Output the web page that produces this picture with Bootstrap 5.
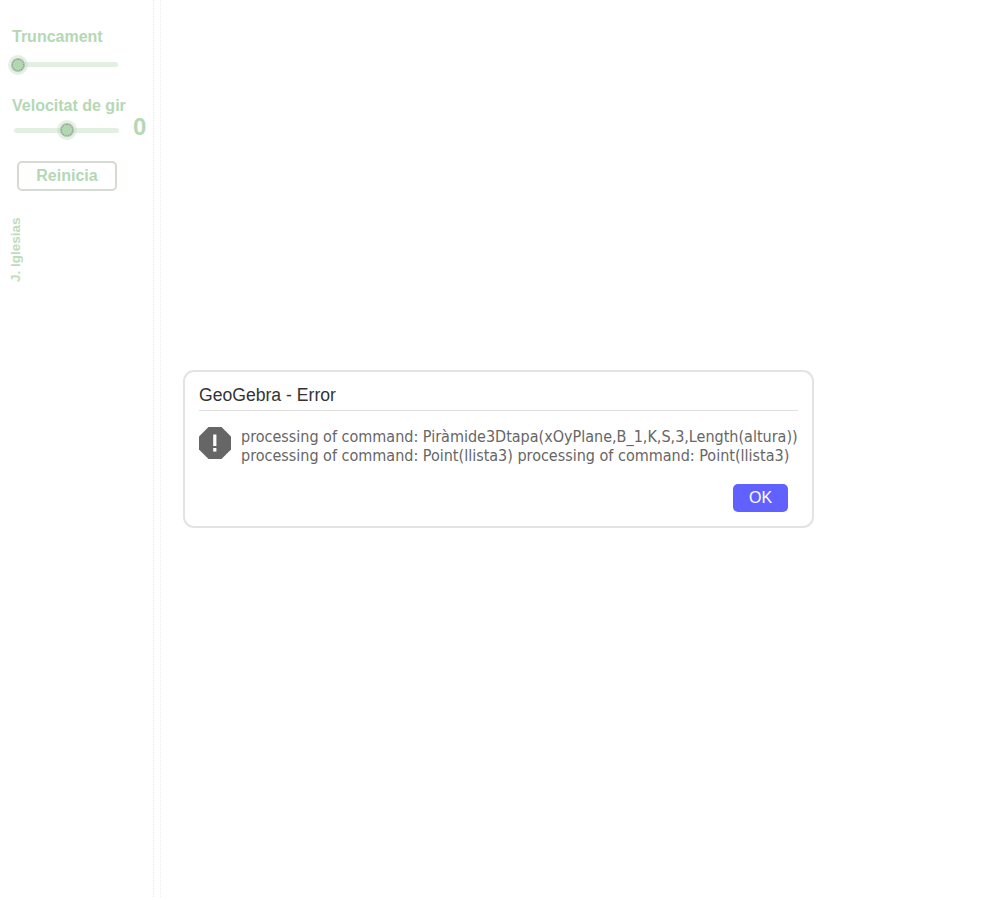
<!DOCTYPE html>
<html lang="ca">
<head>
    <meta charset="UTF-8">
    <meta name="viewport" content="width=device-width, initial-scale=1.0">
    <title>GeoGebra - Error</title>
    <link href="https://cdn.jsdelivr.net/npm/bootstrap@5.3.0/dist/css/bootstrap.min.css" rel="stylesheet">
    <style>
        body {
            background: #fff;
            font-family: "Liberation Sans", Arial, sans-serif;
        }

        .applet {
            height: 897px;
        }

        .side-panel {
            width: 161px;
            border-right: 1px dotted #eee;
            padding: 27px 0 0 12px;
            position: relative;
        }

        .side-panel::after {
            content: "";
            position: absolute;
            top: 0;
            bottom: 0;
            left: 153px;
            border-left: 1px dotted #e6e6e6;
        }

        .ctl-label {
            color: #b4d8b4;
            font-size: 16px;
            font-weight: 700;
            line-height: 19px;
        }

        .ctl-gap {
            margin-top: 29px;
        }

        .ctl-value {
            color: #b4d8b4;
            font-size: 24px;
            font-weight: 700;
            line-height: 18px;
            margin-left: 14px;
        }

        .slider-track {
            position: relative;
            height: 5px;
            border-radius: 3px;
            background: #e2f0e2;
        }

        .slider-a {
            width: 106px;
            margin: 16px 0 0 0;
        }

        .slider-b {
            width: 105px;
            margin-left: 2px;
        }

        .slider-knob {
            position: absolute;
            top: 50%;
            width: 12px;
            height: 12px;
            margin: -6px 0 0 -6px;
            border-radius: 50%;
            background: #b3d7b3;
            border: 1px dotted #7f937f;
            box-shadow: 0 0 0 1px rgba(150, 165, 150, .6), 0 0 0 4px rgba(190, 215, 190, .4);
        }

        .knob-start {
            left: 5.5px;
        }

        .knob-mid {
            left: 52.5px;
        }

        .row-gir {
            height: 24px;
            margin-top: 3px;
        }

        .reset-btn {
            width: 100px;
            height: 30px;
            margin: 19px 0 0 5px;
            padding: 0;
            background: #fff;
            border: 2px solid #d3dbd3;
            border-radius: 5px;
            color: #b4d8b4;
            font-size: 16px;
            font-weight: 700;
            line-height: 24px;
        }

        .credit {
            margin: 27px 0 0 -4px;
            width: 16px;
            height: 64px;
            writing-mode: vertical-rl;
            transform: rotate(180deg);
            color: #bcdcbc;
            font-size: 13.5px;
            font-weight: 700;
            line-height: 16px;
            white-space: nowrap;
        }

        .error-box {
            position: absolute;
            left: 183px;
            top: 370px;
            width: 631px;
            height: 158px;
            padding: 12px 14px 0 14px;
            background: #fff;
            border: 2px solid #e3e3e3;
            border-radius: 11px;
        }

        .error-title {
            color: #333;
            font-size: 17.6px;
            line-height: 22px;
            padding-bottom: 4px;
            border-bottom: 1px solid #e0e0e0;
        }

        .error-row {
            margin-top: 16px;
            gap: 10px;
        }

        .error-text {
            color: #666;
            font-family: "DejaVu Sans", sans-serif;
            font-stretch: condensed;
            font-size: 16px;
            line-height: 19px;
            white-space: nowrap;
        }

        .ok-row {
            margin-top: 19px;
        }

        .ok-btn {
            width: 55px;
            height: 28px;
            margin-right: 10px;
            padding: 0;
            background: #6161ff;
            border: 0;
            border-radius: 5px;
            color: #fff;
            font-size: 16px;
            line-height: 28px;
        }
    </style>
</head>
<body>
    <div class="applet d-flex">
        <div class="side-panel flex-shrink-0">
            <div class="ctl-label">Truncament</div>
            <div class="slider-track slider-a"><div class="slider-knob knob-start"></div></div>

            <div class="ctl-label ctl-gap">Velocitat de gir</div>
            <div class="d-flex align-items-center row-gir">
                <div class="slider-track slider-b"><div class="slider-knob knob-mid"></div></div>
                <div class="ctl-value align-self-start">0</div>
            </div>

            <button type="button" class="reset-btn d-block">Reinicia</button>
            <div class="credit">J. Iglesias</div>
        </div>
    </div>

    <div class="error-box">
        <div class="error-title">GeoGebra - Error</div>
        <div class="error-row d-flex align-items-start">
            <svg width="32" height="32" viewBox="0 0 32 32" class="flex-shrink-0">
                <polygon points="9.5,0 22.5,0 32,9.5 32,22.5 22.5,32 9.5,32 0,22.5 0,9.5" fill="#666"/>
                <rect x="14.2" y="7.5" width="3.2" height="11.5" fill="#fff"/>
                <rect x="14.2" y="21" width="3.2" height="3.6" fill="#fff"/>
            </svg>
            <div class="error-text">processing of command: Piràmide3Dtapa(xOyPlane,B_1,K,S,3,Length(altura))<br>processing of command: Point(llista3) processing of command: Point(llista3)</div>
        </div>
        <div class="ok-row d-flex justify-content-end">
            <button type="button" class="ok-btn">OK</button>
        </div>
    </div>

    <script src="https://cdn.jsdelivr.net/npm/bootstrap@5.3.0/dist/js/bootstrap.bundle.min.js"></script>
</body>
</html>
